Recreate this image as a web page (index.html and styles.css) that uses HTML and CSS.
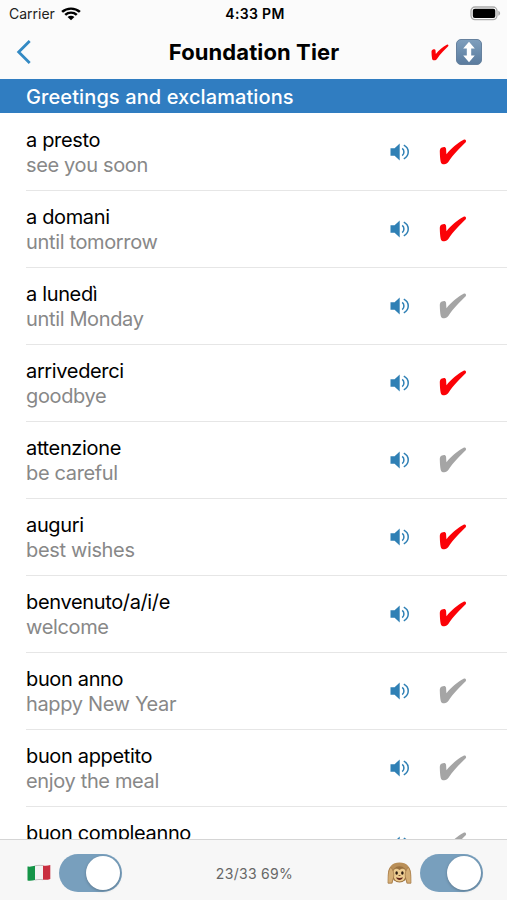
FILE: index.html
```html
<!DOCTYPE html>
<html lang="en">
<head>
  <meta charset="UTF-8">
  <title>Foundation Tier</title>
  <link rel="stylesheet" href="styles.css">
</head>
<body>
  <!-- Shared icons -->
  <svg class="sprite" width="0" height="0">
    <symbol id="tick" viewBox="0 0 28 26">
      <path d="M.8 12.8C.7 10.3 1.300 9.2 3 8.500C5 7.600 6.700 7.900 7 9.600C7.300 11.100 7.100 13 7.500 15.200C12 9.700 18.600 3.800 24.600 .8C26.500 0 27.800 1.800 26.700 3.300C21.400 8.500 14.200 15.500 9.500 22.800C8.400 24.500 7 25.200 5.300 25.200C3 25.200 2.200 24.600 1.700 22.700C1.100 19.900 .9 16.400 .8 12.800Z"/>
    </symbol>
    <symbol id="speaker" viewBox="0 0 20 18">
      <path d="M.5 5.2H4.600L9.700 .6V17.400L4.600 12.800H.5Z" fill="currentColor"/>
      <path d="M12.200 5.400C14.500 7.200 14.500 10.800 12.200 12.600M13.800 2.200C19.700 5.200 19.700 12.800 13.800 15.800" fill="none" stroke="currentColor" stroke-width="1.5"/>
    </symbol>
  </svg>

  <div class="screen">
    <header>
      <div class="status-bar">
        <div class="carrier">
          <span>Carrier</span>
          <svg width="20" height="14" viewBox="0 0 18 14" preserveAspectRatio="none">
            <path d="M1 4.800C5.500 .5 12.500 .5 17 4.800M3.800 7.800C6.800 5 11.200 5 14.200 7.800" fill="none" stroke="#000" stroke-width="2.300"/>
            <path d="M5.900 10C7.700 8.300 10.300 8.300 12.100 10L9 13.300Z"/>
          </svg>
        </div>
        <div class="time">4:33 PM</div>
        <svg class="battery" width="31" height="15" viewBox="0 0 31 15">
          <rect x="1" y="1" width="26" height="12.600" rx="4" fill="#fff" stroke="#aaa" stroke-width="1.300"/>
          <rect x="2.800" y="2.700" width="22.500" height="9.200" rx="2"/>
          <path d="M28.300 4.800C30.700 5.700 30.700 8.900 28.300 9.800Z" fill="#aaa"/>
        </svg>
      </div>
      <div class="nav-bar">
        <svg class="back" width="16" height="24" viewBox="0 0 16 24">
          <path d="M13.700 1L2.700 12L13.700 23" fill="none" stroke="#338ac4" stroke-width="2.800"/>
        </svg>
        <h1>Foundation Tier</h1>
        <div class="nav-actions">
          <svg class="tick-small red"><use href="#tick"/></svg>
          <svg width="26" height="26" viewBox="0 0 26 26">
            <defs>
              <linearGradient id="sortFill" x1="0" y1="0" x2="0" y2="1">
                <stop offset="0" stop-color="#7f9fbd"/>
                <stop offset="1" stop-color="#5a7b9e"/>
              </linearGradient>
            </defs>
            <rect x=".5" y=".5" width="25" height="25" rx="4.500" fill="url(#sortFill)" stroke="#66819e"/>
            <path d="M13 2.800L18.800 9.400H15.200V16.600H18.800L13 23.200L7.200 16.600H10.800V9.400H7.200Z" fill="#fff"/>
          </svg>
        </div>
      </div>
    </header>

    <h2>Greetings and exclamations</h2>

    <ul class="phrases">
      <li>
        <div class="phrase"><b>a presto</b><span>see you soon</span></div>
        <svg class="speaker"><use href="#speaker"/></svg>
        <svg class="tick red"><use href="#tick"/></svg>
      </li>
      <li>
        <div class="phrase"><b>a domani</b><span>until tomorrow</span></div>
        <svg class="speaker"><use href="#speaker"/></svg>
        <svg class="tick red"><use href="#tick"/></svg>
      </li>
      <li>
        <div class="phrase"><b>a lunedì</b><span>until Monday</span></div>
        <svg class="speaker"><use href="#speaker"/></svg>
        <svg class="tick"><use href="#tick"/></svg>
      </li>
      <li>
        <div class="phrase"><b>arrivederci</b><span>goodbye</span></div>
        <svg class="speaker"><use href="#speaker"/></svg>
        <svg class="tick red"><use href="#tick"/></svg>
      </li>
      <li>
        <div class="phrase"><b>attenzione</b><span>be careful</span></div>
        <svg class="speaker"><use href="#speaker"/></svg>
        <svg class="tick"><use href="#tick"/></svg>
      </li>
      <li>
        <div class="phrase"><b>auguri</b><span>best wishes</span></div>
        <svg class="speaker"><use href="#speaker"/></svg>
        <svg class="tick red"><use href="#tick"/></svg>
      </li>
      <li>
        <div class="phrase"><b>benvenuto/a/i/e</b><span>welcome</span></div>
        <svg class="speaker"><use href="#speaker"/></svg>
        <svg class="tick red"><use href="#tick"/></svg>
      </li>
      <li>
        <div class="phrase"><b>buon anno</b><span>happy New Year</span></div>
        <svg class="speaker"><use href="#speaker"/></svg>
        <svg class="tick"><use href="#tick"/></svg>
      </li>
      <li>
        <div class="phrase"><b>buon appetito</b><span>enjoy the meal</span></div>
        <svg class="speaker"><use href="#speaker"/></svg>
        <svg class="tick"><use href="#tick"/></svg>
      </li>
      <li>
        <div class="phrase"><b>buon compleanno</b></div>
        <svg class="speaker"><use href="#speaker"/></svg>
        <svg class="tick"><use href="#tick"/></svg>
      </li>
    </ul>

    <footer>
      <div class="option">
        <svg class="flag" width="24" height="18" viewBox="0 0 24 18">
          <path d="M.5 2.500C3 2.900 5.500 2.400 8 1.800V16C5.500 16.600 3 16.900 .5 16.500Z" fill="#149447"/>
          <path d="M8 1.800C11 1.200 13 1.300 16 1.500V15.700C13 15.400 11 15.400 8 16Z" fill="#f3f3f3"/>
          <path d="M16 1.500C18.500 1.900 21 1.700 23.300 1V15C21 15.900 18.500 16 16 15.700Z" fill="#c92f40"/>
          <path d="M8 1.800C11 1.200 13 1.300 16 1.500M8 16C11 15.400 13 15.400 16 15.700" fill="none" stroke="#999" stroke-width=".6"/>
        </svg>
        <div class="switch"></div>
      </div>
      <div class="score">23/33 69%</div>
      <div class="option">
        <svg class="monkey" width="25" height="24" viewBox="0 0 26 24">
          <path d="M1 23V14C1 5.500 5.500 1 13 1S25 5.500 25 14V23H20.500L19 18H7L5.500 23Z" fill="#b98f58"/>
          <ellipse cx="13" cy="13.500" rx="8" ry="8.500" fill="#98703f"/>
          <path d="M13 9C9.500 5.500 5.500 8.500 6.500 12.500C7 14.500 6.800 15.500 7.500 17.500C9 22 17 22 18.500 17.500C19.200 15.500 19 14.500 19.500 12.500C20.500 8.500 16.500 5.500 13 9Z" fill="#edcc91"/>
          <path d="M4 6C.5 10 1.200 17 1 22.500H5L7 16C7.500 12.500 6.500 9 4 6ZM22 6C25.500 10 24.800 17 25 22.500H21L19 16C18.500 12.500 19.500 9 22 6Z" fill="#d5ae75" stroke="#9b7040" stroke-width=".6"/>
          <ellipse cx="10" cy="12" rx="1.300" ry="1.700" fill="#2c1b10"/>
          <ellipse cx="16" cy="12" rx="1.300" ry="1.700" fill="#2c1b10"/>
          <path d="M9.500 16.500C11.500 17.400 14.500 17.400 16.500 16.500C15.700 20.300 10.300 20.300 9.500 16.500Z" fill="#63251b"/>
          <path d="M12 14.600H14" stroke="#79542d"/>
        </svg>
        <div class="switch"></div>
      </div>
    </footer>
  </div>
</body>
</html>
```
FILE: styles.css
```css
* {
  box-sizing: border-box;
}

body {
  margin: 0;
  font-family: Inter, "Liberation Sans", sans-serif;
  color: #000;
}

svg {
  display: block;
  flex-shrink: 0;
}

.sprite {
  position: absolute;
}

.screen {
  height: 900px;
  display: flex;
  flex-direction: column;
  overflow: hidden;
  background: #fff;
}

header {
  height: 79px;
  flex-shrink: 0;
  background: #fbfbfb;
}

.status-bar {
  display: grid;
  grid-template-columns: 1fr auto 1fr;
  align-items: center;
  height: 27px;
  padding: 0 6px 0 9px;
  font-size: 14px;
}

.carrier {
  display: flex;
  align-items: center;
  gap: 6px;
  color: #222;
}

.time {
  font-weight: 600;
  font-size: 14px;
  letter-spacing: 0.35px;
}

.battery {
  justify-self: end;
}

.nav-bar {
  display: grid;
  grid-template-columns: 1fr auto 1fr;
  align-items: center;
  height: 50px;
  padding: 0 25px 0 16px;
}

h1 {
  margin: 0;
  padding-left: 10px;
  font-size: 22px;
  font-weight: 700;
  letter-spacing: 0.1px;
}

.nav-actions {
  display: flex;
  justify-content: flex-end;
  align-items: center;
  gap: 7px;
}

.tick-small {
  width: 18px;
  height: 17px;
}

h2 {
  flex-shrink: 0;
  height: 34px;
  margin: 0;
  padding-left: 26px;
  background: #307dc1;
  color: #fff;
  font-size: 20px;
  font-weight: 500;
  letter-spacing: 0.1px;
  line-height: 36px;
}

.phrases {
  flex: 1;
  min-height: 0;
  margin: 0;
  padding: 1px 0 0 26px;
  overflow: hidden;
  list-style: none;
}

.phrases li {
  display: flex;
  align-items: center;
  height: 77px;
  padding-right: 40px;
  border-bottom: 1px solid #e6e6e6;
}

.phrase {
  flex: 1;
  height: 49px;
  font-size: 20px;
  line-height: 25px;
  letter-spacing: -0.35px;
}

.phrase b,
.phrase span {
  display: block;
  font-weight: 400;
}

.phrase span {
  color: #888;
}

.speaker {
  width: 20px;
  height: 18px;
  margin-right: 29px;
  color: #2f80b5;
}

.tick {
  width: 28px;
  height: 26px;
  fill: #a5a5a5;
}

.red {
  fill: #fb0207;
}

footer {
  display: flex;
  justify-content: space-between;
  align-items: center;
  flex-shrink: 0;
  height: 61px;
  padding: 6px 24px 0 27px;
  border-top: 1px solid #d5d5d5;
  background: #f7f7f7;
}

.option {
  display: flex;
  align-items: center;
  gap: 8px;
}

.switch {
  width: 63px;
  height: 38px;
  padding: 2px;
  border-radius: 19px;
  background: #789fbd;
}

.switch::after {
  content: "";
  display: block;
  width: 34px;
  height: 34px;
  margin-left: auto;
  border-radius: 50%;
  background: #fff;
  box-shadow: 0 1px 3px rgba(0, 0, 0, 0.25);
}

.score {
  font-size: 14px;
  letter-spacing: 0.3px;
  color: #666;
}
```
